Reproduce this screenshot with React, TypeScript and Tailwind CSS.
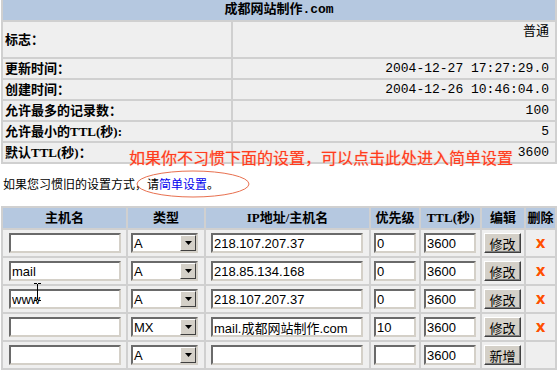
const SERIF = "font-['Liberation_Serif','Noto_Sans_CJK_SC',serif]";
const MONO = "font-['Liberation_Mono','Noto_Sans_CJK_SC',monospace]";
const SANS = "font-['Liberation_Sans','Noto_Sans_CJK_SC',sans-serif]";

const INFO = [
  { label: "更新时间：", value: "2004-12-27 17:27:29.0" },
  { label: "创建时间：", value: "2004-12-26 10:46:04.0" },
  { label: "允许最多的记录数：", value: "100" },
  { label: "允许最小的TTL(秒):", value: "5" },
  { label: "默认TTL(秒)：", value: "3600" },
];

const HEADERS = ["主机名", "类型", "IP地址/主机名", "优先级", "TTL(秒)", "编辑", "删除"];

const RECORDS = [
  { host: "", type: "A", ip: "218.107.207.37", pri: "0", ttl: "3600", action: "修改", del: true },
  { host: "mail", type: "A", ip: "218.85.134.168", pri: "0", ttl: "3600", action: "修改", del: true },
  { host: "www", type: "A", ip: "218.107.207.37", pri: "0", ttl: "3600", action: "修改", del: true },
  { host: "", type: "MX", ip: "mail.成都网站制作.com", pri: "10", ttl: "3600", action: "修改", del: true },
  { host: "", type: "A", ip: "", pri: "", ttl: "3600", action: "新增", del: false },
];

const inset =
  "h-[20px] bg-white border-2 border-t-[#6a6a6a] border-l-[#6a6a6a] border-r-[#d4d0c8] border-b-[#d4d0c8] text-[13px] text-black pl-px outline-none";

function TextBox({ value, width }: { value: string; width: string }) {
  return <input readOnly value={value} className={`${inset} ${width} ${SANS}`} />;
}

function SelectBox({ value }: { value: string }) {
  return (
    <div className={`${inset} w-[67px] flex items-center justify-between pl-[3px] ${SANS}`}>
      <span className="leading-none">{value}</span>
      <div className="w-[16px] h-[16px] bg-[#d4d0c8] border border-t-white border-l-white border-r-[#404040] border-b-[#404040] flex items-center justify-center">
        <svg width="7" height="4" viewBox="0 0 7 4">
          <polygon points="0,0 7,0 3.5,4" fill="#000" />
        </svg>
      </div>
    </div>
  );
}

export default function App() {
  return (
    <div className={`relative w-[560px] h-[376px] bg-white text-black overflow-hidden ${SERIF}`}>
      {/* domain info */}
      <div className="ml-px w-[556px] grid grid-cols-[228px_322px] gap-[2px] bg-[#d0d0d0] px-[2px] pb-[2px]">
        <div className={`col-span-2 h-[20px] bg-[#b5c8e0] flex items-center justify-center text-[13px] font-bold ${MONO}`}>
          成都网站制作.com
        </div>
        <div className="h-[35px] bg-[#efefef] flex items-center pl-[2px] text-[13px] font-bold">标志：</div>
        <div className="h-[35px] bg-[#efefef] flex justify-end pr-[6px] text-[13px] leading-[18px]">普通</div>
        {INFO.map((r) => (
          <div key={r.label} className="contents">
            <div className="h-[19px] bg-[#efefef] flex items-center pl-[2px] text-[13px] font-bold">{r.label}</div>
            <div className={`h-[19px] bg-[#efefef] flex items-center justify-end pr-[6px] text-[13px] ${MONO}`}>
              {r.value}
            </div>
          </div>
        ))}
      </div>

      <div className={`h-[42px] flex items-center pl-[3px] text-[12px] ${SANS}`}>
        如果您习惯旧的设置方式，请<span className="text-[#0000ee]">简单设置</span>。
      </div>

      {/* records */}
      <div className="ml-px w-[556px] grid grid-cols-[123px_76px_163px_48px_59px_42px_29px] gap-[2px] bg-[#d0d0d0] p-[2px]">
        {HEADERS.map((h) => (
          <div key={h} className="h-[20px] bg-[#b5c8e0] flex items-center justify-center text-[13px] font-bold">
            {h}
          </div>
        ))}
        {RECORDS.map((r, i) => (
          <div key={i} className="contents">
            <div className="h-[26px] bg-[#efefef] flex items-center pl-[6px]">
              <TextBox value={r.host} width="w-[112px]" />
            </div>
            <div className="h-[26px] bg-[#efefef] flex items-center pl-[3px]">
              <SelectBox value={r.type} />
            </div>
            <div className="h-[26px] bg-[#efefef] flex items-center pl-[5px]">
              <TextBox value={r.ip} width="w-[152px]" />
            </div>
            <div className="h-[26px] bg-[#efefef] flex items-center pl-[3px]">
              <TextBox value={r.pri} width="w-[42px]" />
            </div>
            <div className="h-[26px] bg-[#efefef] flex items-center pl-[3px]">
              <TextBox value={r.ttl} width="w-[52px]" />
            </div>
            <div className="h-[26px] bg-[#efefef] flex items-center pl-[2px]">
              <button className="w-[37px] h-[20px] bg-[#d4d0c8] border border-t-white border-l-white border-r-[#404040] border-b-[#404040] shadow-[inset_-1px_-1px_#808080] text-[13px] leading-none font-['Noto_Sans_CJK_SC',sans-serif]">
                {r.action}
              </button>
            </div>
            <div className="h-[26px] bg-[#efefef] flex items-center justify-center">
              {r.del && (
                <span className="text-[#ff5000] font-bold text-[15px] leading-none font-['DejaVu_Sans',sans-serif]">x</span>
              )}
            </div>
          </div>
        ))}
      </div>

      {/* annotation */}
      <div className="absolute left-[129px] top-[148px] text-[16px] leading-[18px] text-[#ff3c1e] [text-shadow:0_0_1px_#ff9a80] font-['Noto_Sans_CJK_SC',sans-serif] whitespace-nowrap">
        如果你不习惯下面的设置，可以点击此处进入简单设置
      </div>
      <svg className="absolute left-[136px] top-[170px]" width="114" height="28" viewBox="0 0 114 28">
        <ellipse cx="57" cy="14" rx="56" ry="13" fill="none" stroke="#e8704f" strokeWidth="1" />
      </svg>

      {/* text cursor */}
      <svg className="absolute left-[33px] top-[283px]" width="9" height="18" viewBox="0 0 9 18">
        <path d="M1 0.5h3M5 0.5h3M4.5 1v16M1 17.5h3M5 17.5h3" stroke="#000" strokeWidth="1" fill="none" />
      </svg>
    </div>
  );
}
